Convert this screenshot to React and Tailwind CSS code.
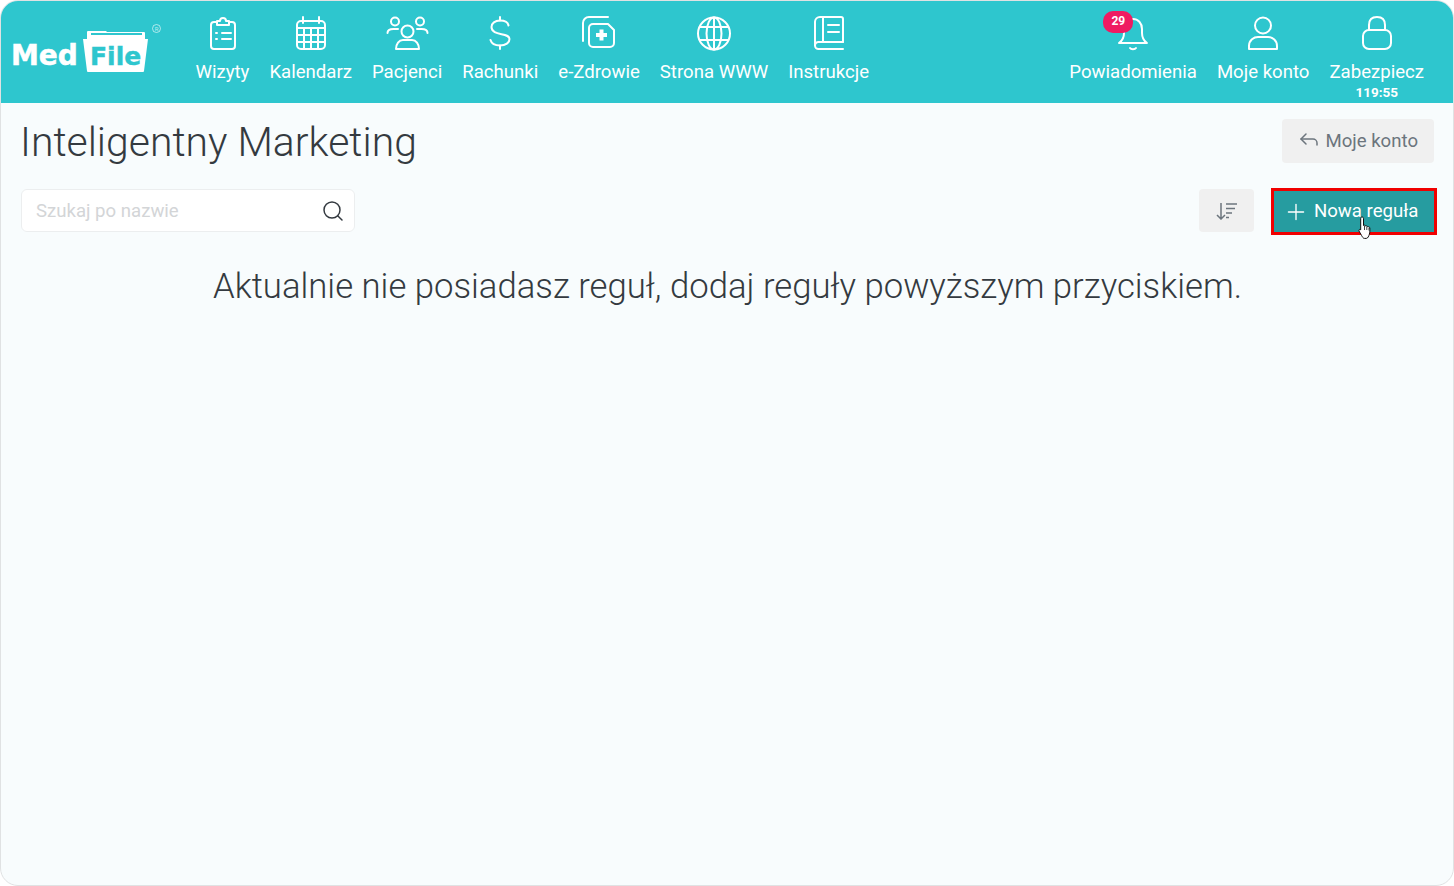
import React from 'react';
import { Plus, Reply, Search } from 'lucide-react';

const Ico = ({ children }) => (
    <svg width={48} height={44} viewBox="0 0 48 44" fill="none" stroke="currentColor" strokeWidth="2" strokeLinecap="round" strokeLinejoin="round">
        {children}
    </svg>
);

const Clipboard = () => (
    <Ico>
        <path d="M18 12h-2a3 3 0 0 0-3 3v21a3 3 0 0 0 3 3h18a3 3 0 0 0 3-3V15a3 3 0 0 0-3-3h-2" />
        <path d="M19 15v-4h3a3 3 0 0 1 6 0h3v4z" />
        <path d="M18 23h1M24 23h9M18 29h1M24 29h9" />
    </Ico>
);

const Calendar = () => (
    <Ico>
        <rect x="10" y="11" width="28" height="28" rx="4" />
        <path d="M16 7v6M32 7v6M10 18h28M10 25h28M10 32h28M17 18v21M24 18v21M31 18v21" />
    </Ico>
);

const People = () => (
    <Ico>
        <circle cx="12" cy="11.500" r="4" />
        <circle cx="37" cy="11.500" r="4" />
        <circle cx="24.500" cy="21.500" r="6" />
        <path d="M4.500 23c0-2.500 2.500-4 6-4h4.500M44.500 23c0-2.500-2.500-4-6-4H34" />
        <path d="M13 39c0-5 3-9 7-9h9c4 0 7 4 7 9z" />
    </Ico>
);

const Dollar = () => (
    <Ico>
        <path d="M24 7v3.500M24 35.500V39" />
        <path d="M32.500 15.500c-.5-3-3.500-5-8.500-5-5 0-8.500 2.800-8.500 6.500 0 9.500 18 5 18 12 0 3.800-3.800 6.500-9.500 6.500-5 0-8.500-2-9.500-5.500" />
    </Ico>
);

const Health = () => (
    <Ico>
        <path d="M33 7H14a6 6 0 0 0-6 6v18" />
        <path d="M18 14h15l6 6v13a4 4 0 0 1-4 4H18a4 4 0 0 1-4-4V18a4 4 0 0 1 4-4z" />
        <path d="M26.500 19.500v11M21 25h11" strokeWidth="4" strokeLinecap="butt" />
    </Ico>
);

const Globe = () => (
    <Ico>
        <circle cx="24" cy="23.500" r="16" />
        <ellipse cx="24" cy="23.500" rx="7.500" ry="16" />
        <path d="M24 7.500v32M10 17h28M10 30h28" />
    </Ico>
);

const Book = () => (
    <Ico>
        <path d="M38 32V9a2 2 0 0 0-2-2H15a5 5 0 0 0-5 5v23" />
        <path d="M18 7v25" />
        <path d="M10 35.500a3.500 3.500 0 0 1 3.500-3.500H38M38 39H13.500a3.500 3.500 0 0 1-3.500-3.500" />
        <path d="M23 15h11M23 22h11" />
    </Ico>
);

const Bell = () => (
    <Ico>
        <path d="M10 33c3-2 5-5 5-10v-4c0-6 4-10 9-10s9 4 9 10v4c0 5 2 8 5 10z" />
        <path d="M21 38c1 1.500 5 1.500 6 0" />
    </Ico>
);

const Person = () => (
    <Ico>
        <circle cx="24" cy="15.500" r="8" />
        <path d="M10 39v-3c0-6 5-9 9-9h10c4 0 9 3 9 9v3z" />
    </Ico>
);

const Lock = () => (
    <Ico>
        <rect x="10" y="20" width="28" height="19" rx="6" />
        <path d="M16 20v-5c0-5 3-8 8-8s8 3 8 8v5" />
    </Ico>
);

const Logo = () => (
    <div className="relative w-[184.500px] h-[102px] shrink-0">
        <span className="absolute left-[10px] top-[37px] text-[28px] leading-[36px] font-bold text-white font-['DejaVu_Sans',sans-serif] [-webkit-text-stroke:0.5px_white]">Med</span>
        <svg className="absolute left-[82px] top-[29px]" width="66" height="42" viewBox="0 0 66 42">
            <path d="M4 9V2a1 1 0 0 1 1-1h18l1 1h37a1 1 0 0 1 1 1v6h3l-4 32a1 1 0 0 1-1 1H5a1 1 0 0 1-1-1L0 9z" fill="#fff" />
            <path d="M8 4h51" stroke="#2ec6ce" strokeWidth="2" />
        </svg>
        <span className="absolute left-[89px] top-[40px] text-[25px] leading-[32px] font-bold text-[#2ec6ce] font-['DejaVu_Sans',sans-serif] [-webkit-text-stroke:0.4px_#2ec6ce]">File</span>
        <span className="absolute left-[151px] top-[23px] w-[9px] h-[9px] rounded-full border border-white/60 text-[6px] leading-[7px] text-white/70 text-center">R</span>
    </div>
);

const NavItem = ({ icon, label, sub, badge }) => (
    <div className="relative flex flex-col items-center h-[102px] px-[10px] pt-[9px] text-white">
        {icon}
        <span className="text-[18.600px] leading-[24px] mt-[6px] whitespace-nowrap">{label}</span>
        {sub && <span className="text-[13.500px] leading-[16px] font-bold">{sub}</span>}
        {badge && (
            <span className="absolute left-[44px] top-[10px] w-[30px] h-[22px] rounded-[10px] bg-[#ef1b62] text-[12px] leading-[21px] font-bold text-center">{badge}</span>
        )}
    </div>
);

const leftNav = [
    { label: "Wizyty", icon: <Clipboard /> },
    { label: "Kalendarz", icon: <Calendar /> },
    { label: "Pacjenci", icon: <People /> },
    { label: "Rachunki", icon: <Dollar /> },
    { label: "e-Zdrowie", icon: <Health /> },
    { label: "Strona WWW", icon: <Globe /> },
    { label: "Instrukcje", icon: <Book /> },
];

export default function App() {
    return (
        <div className="w-[1454px] h-[886px] bg-white overflow-hidden font-['Roboto',sans-serif]">
            <div className="h-full rounded-[18px] border border-[#e0e2e3] bg-[#f8fcfd] overflow-hidden flex flex-col">
                <header className="h-[102px] shrink-0 bg-[#2ec6ce] flex items-start pr-[19px]">
                    <Logo />
                    <nav className="flex">
                        {leftNav.map((item) => <NavItem key={item.label} {...item} />)}
                    </nav>
                    <div className="flex ml-auto">
                        <NavItem label="Powiadomienia" icon={<Bell />} badge="29" />
                        <NavItem label="Moje konto" icon={<Person />} />
                        <NavItem label="Zabezpiecz" icon={<Lock />} sub="119:55" />
                    </div>
                </header>

                <main className="flex-1 pl-[20px] pr-[19px]">
                    <div className="flex items-start justify-between pt-[16px]">
                        <h1 className="-ml-[1px] text-[40.900px] leading-[46px] font-light text-[#343a40]">Inteligentny Marketing</h1>
                        <button className="h-[44px] pl-[15px] pr-[16px] rounded-[4px] bg-[#f0f0f0] text-[#6c757d] text-[18.600px] flex items-center gap-[4px]">
                            <Reply size={24} strokeWidth={1.5} className="-mt-[4px]" />
                            <span className="mt-[1px]">Moje konto</span>
                        </button>
                    </div>

                    <div className="flex items-start mt-[23px]">
                        <div className="mt-[1px] w-[334px] h-[43px] rounded-[6px] border border-[#eceeef] bg-white flex items-center justify-between pl-[14px] pr-[9px]">
                            <span className="mt-[2px] text-[18.600px] text-[#d3d5d7]">Szukaj po nazwie</span>
                            <Search size={24} strokeWidth={1.5} className="text-[#343a40]" />
                        </div>
                        <button className="mt-[1px] ml-auto w-[55px] h-[43px] rounded-[4px] bg-[#f0f0f0] text-[#6c757d] flex items-center justify-center">
                            <svg width="22" height="18" viewBox="0 0 22 18" fill="none" stroke="currentColor" strokeWidth="1.500">
                                <path d="M5 1v16M1 13l4 4 4-4" />
                                <path d="M10 2h11M10 6.500h9M10 11h6M10 15.500h3" />
                            </svg>
                        </button>
                        <div className="relative ml-[17px] -mr-[3px] w-[166px] h-[47px] border-[3px] border-[#f00000] bg-[#269ca0] text-white text-[18.600px] flex items-center pl-[9px] gap-[5px]">
                            <Plus size={26} strokeWidth={1.25} />
                            Nowa reguła
                            <svg className="absolute left-[84px] top-[25px]" width="16" height="24" viewBox="0 0 16 24">
                                <path d="M4 1c1 0 1.500.7 1.500 1.700V9.500l1-.3c.8 0 1.200.4 1.300 1 .6-.4 1.700-.2 2 .7.700-.4 1.800 0 2 1 .1 2 .2 4.500-.5 6.500-.4 1.500-1.500 4-3 4H6.500c-1.500 0-2-1.500-3-3L1 15c-.4-1 .5-2 1.500-1.300l.2.200V2.700C2.700 1.700 3.100 1 4 1z" fill="#fff" stroke="#111" strokeWidth="1" />
                                <path d="M6.500 10v4M8.800 11v3M11 12v2.500" stroke="#111" strokeWidth="0.800" fill="none" />
                            </svg>
                        </div>
                    </div>

                    <p className="mt-[29px] text-center text-[34.700px] leading-[44px] font-light text-[#343a40]">
                        Aktualnie nie posiadasz reguł, dodaj reguły powyższym przyciskiem.
                    </p>
                </main>
            </div>
        </div>
    );
}
